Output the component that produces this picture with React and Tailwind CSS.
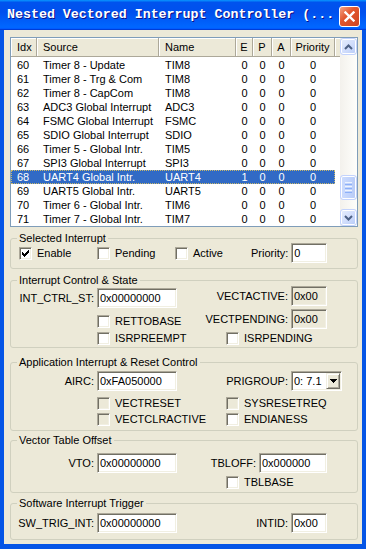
import React from "react";

const rows = [
  ["60", "Timer 8 - Update", "TIM8", "0"],
  ["61", "Timer 8 - Trg & Com", "TIM8", "0"],
  ["62", "Timer 8 - CapCom", "TIM8", "0"],
  ["63", "ADC3 Global Interrupt", "ADC3", "0"],
  ["64", "FSMC Global Interrupt", "FSMC", "0"],
  ["65", "SDIO Global Interrupt", "SDIO", "0"],
  ["66", "Timer 5 - Global Intr.", "TIM5", "0"],
  ["67", "SPI3 Global Interrupt", "SPI3", "0"],
  ["68", "UART4 Global Intr.", "UART4", "1"],
  ["69", "UART5 Global Intr.", "UART5", "0"],
  ["70", "Timer 6 - Global Intr.", "TIM6", "0"],
  ["71", "Timer 7 - Global Intr.", "TIM7", "0"],
];

const sunken =
  "border border-t-[#aca899] border-l-[#aca899] border-b-white border-r-white shadow-[inset_1px_1px_0_#716f64,inset_-1px_-1px_0_#f1efe2]";

function Check({ checked = false, disabled = false }) {
  return (
    <span
      className={`${sunken} w-[13px] h-[13px] shrink-0 flex items-center justify-center ${
        disabled ? "bg-[#ece9d8]" : "bg-white"
      }`}
    >
      {checked && (
        <svg width="7" height="7" viewBox="0 0 7 7" shapeRendering="crispEdges">
          <rect x="6" y="0" width="1" height="1" fill="#000" />
          <rect x="5" y="1" width="2" height="1" fill="#000" />
          <rect x="0" y="2" width="1" height="1" fill="#000" />
          <rect x="4" y="2" width="3" height="1" fill="#000" />
          <rect x="0" y="3" width="2" height="1" fill="#000" />
          <rect x="3" y="3" width="3" height="1" fill="#000" />
          <rect x="0" y="4" width="5" height="1" fill="#000" />
          <rect x="1" y="5" width="3" height="1" fill="#000" />
          <rect x="2" y="6" width="1" height="1" fill="#000" />
        </svg>
      )}
    </span>
  );
}

function CheckLabel({ label, checked, disabled, className = "" }) {
  return (
    <div className={`flex items-center gap-[5px] h-[13px] ${className}`}>
      <Check checked={checked} disabled={disabled} />
      <span className="leading-[13px] whitespace-nowrap">{label}</span>
    </div>
  );
}

function TextBox({ value, className = "", readOnly = false }) {
  return (
    <div
      className={`${sunken} h-[20px] flex items-center pl-[2px] whitespace-nowrap ${
        readOnly ? "bg-[#ece9d8]" : "bg-white"
      } ${className}`}
    >
      {value}
    </div>
  );
}

function Group({ label, className = "", children }) {
  return (
    <div className={`border border-[#d0d0bf] rounded-[3px] ${className}`}>
      <div className="-mt-[7px] ml-[6px] w-fit bg-[#ece9d8] px-[2px] leading-[13px] whitespace-nowrap">
        {label}
      </div>
      {children}
    </div>
  );
}

function Chevron({ up }) {
  return (
    <svg width="9" height="6" viewBox="0 0 9 6">
      <polyline
        points={up ? "1,5 4.5,1.5 8,5" : "1,1 4.5,4.5 8,1"}
        fill="none"
        stroke="#4d6185"
        strokeWidth="2"
      />
    </svg>
  );
}

const scrollBtn =
  "h-[17px] w-[17px] rounded-[3px] border border-[#c3d3fd] bg-[linear-gradient(135deg,#e6eefc,#d2defc_50%,#b7cbf7)] flex items-center justify-center shadow-[inset_0_0_0_1px_#fff]";

function ScrollBar() {
  return (
    <div className="w-[17px] flex flex-col bg-[linear-gradient(90deg,#f3f1ec,#fefefb)]">
      <div className={scrollBtn}>
        <Chevron up />
      </div>
      <div className="h-[120px]" />
      <div className="h-[25px] w-[17px] rounded-[3px] border border-[#c3d3fd] bg-[linear-gradient(90deg,#cddcfd,#c2d4fc_50%,#b8cbf6)] shadow-[inset_0_0_0_1px_#fff] flex flex-col items-center justify-center gap-[1px]">
        <div className="w-[7px] h-[1px] bg-[#eef4fe]" />
        <div className="w-[7px] h-[1px] bg-[#8cb0f8]" />
        <div className="w-[7px] h-[1px] bg-[#eef4fe]" />
        <div className="w-[7px] h-[1px] bg-[#8cb0f8]" />
        <div className="w-[7px] h-[1px] bg-[#eef4fe]" />
        <div className="w-[7px] h-[1px] bg-[#8cb0f8]" />
      </div>
      <div className="flex-1" />
      <div className={scrollBtn}>
        <Chevron />
      </div>
    </div>
  );
}

const headCell =
  "h-full flex items-center border-r border-r-[#aca899] shadow-[inset_1px_1px_0_#fff]";

function ListView() {
  return (
    <div className="h-[190px] border border-[#7f9db9] bg-white flex shrink-0">
      <div className="flex-1 flex flex-col overflow-hidden">
        <div className="h-[19px] flex bg-[#ece9d8] border-b border-b-[#aca899] shrink-0">
          <div className={`${headCell} w-[26px] pl-[6px]`}>Idx</div>
          <div className={`${headCell} w-[122px] pl-[6px]`}>Source</div>
          <div className={`${headCell} w-[77px] pl-[6px]`}>Name</div>
          <div className={`${headCell} w-[17px] justify-center`}>E</div>
          <div className={`${headCell} w-[19px] justify-center`}>P</div>
          <div className={`${headCell} w-[19px] justify-center`}>A</div>
          <div className={`${headCell} w-[44px] justify-center`}>Priority</div>
          <div className="h-full flex-1 shadow-[inset_1px_1px_0_#fff]" />
        </div>
        <div className="pt-[1px] flex flex-col">
          {rows.map((r) => {
            const sel = r[0] === "68";
            return (
              <div
                key={r[0]}
                className={`w-[324px] h-[14px] leading-[14px] flex whitespace-nowrap ${
                  sel
                    ? "bg-[#316ac5] text-white outline-1 outline-dotted outline-[#c8b86a] -outline-offset-1"
                    : ""
                }`}
              >
                <div className="w-[26px] pl-[6px]">{r[0]}</div>
                <div className="w-[122px] pl-[6px]">{r[1]}</div>
                <div className="w-[77px] pl-[6px]">{r[2]}</div>
                <div className="w-[17px] text-center">{r[3]}</div>
                <div className="w-[19px] text-center">0</div>
                <div className="w-[19px] text-center">0</div>
                <div className="w-[44px] text-center">0</div>
              </div>
            );
          })}
        </div>
      </div>
      <ScrollBar />
    </div>
  );
}

function TitleBar() {
  return (
    <div className="h-[30px] shrink-0 flex items-center pl-[7px] pr-[6px] bg-[linear-gradient(180deg,#0997ff,#0053ee_8%,#0050ee_40%,#06f_88%,#06f_93%,#005bff_95%,#003dd7_96%,#003dd7)]">
      <span className="flex-1 overflow-hidden whitespace-nowrap text-white font-bold font-['Liberation_Mono',monospace] text-[13.3px] [text-shadow:1px_1px_#0f1089]">
        Nested Vectored Interrupt Controller (...
      </span>
      <div className="mt-[3px] w-[21px] h-[21px] rounded-[3px] border border-white bg-[linear-gradient(135deg,#f4a486,#e2582f_40%,#cf4420)] flex items-center justify-center">
        <svg width="11" height="11" viewBox="0 0 11 11">
          <path d="M1.5 1.5 L9.5 9.5 M9.5 1.5 L1.5 9.5" stroke="#fff" strokeWidth="2.4" strokeLinecap="square" />
        </svg>
      </div>
    </div>
  );
}

export default function App() {
  return (
    <div className="w-[366px] h-[549px] flex flex-col bg-[#0555e6] font-['Liberation_Sans',Arial,sans-serif] text-[11px] text-black">
      <TitleBar />
      <div className="flex-1 mx-[4px] mb-[5px] bg-[#ece9d8] pt-[7px] pl-[6px] pr-[4px] flex flex-col">
        <ListView />

        <Group label="Selected Interrupt" className="mt-[11px] h-[31px]">
          <div className="-mt-[2px] h-[20px] flex items-center pl-[8px]">
            <CheckLabel label="Enable" checked className="w-[78px] gap-[4px]" />
            <CheckLabel label="Pending" className="w-[78px]" />
            <CheckLabel label="Active" className="w-[76px]" />
            <span>Priority:</span>
            <TextBox value="0" className="ml-[3px] w-[36px]" />
          </div>
        </Group>

        <Group label="Interrupt Control & State" className="mt-[11px] h-[68px]">
          <div className="flex">
            <div className="w-[190px] flex flex-col">
              <div className="mt-[1px] flex items-center">
                <span className="w-[83px] text-right">INT_CTRL_ST:</span>
                <TextBox value="0x00000000" className="ml-[3px] w-[80px]" />
              </div>
              <CheckLabel label="RETTOBASE" className="mt-[7px] pl-[86px]" />
              <CheckLabel label="ISRPREEMPT" className="mt-[4px] pl-[86px]" />
            </div>
            <div className="flex-1 flex flex-col">
              <div className="-mt-[1px] flex items-center">
                <span className="w-[87px] text-right">VECTACTIVE:</span>
                <TextBox value="0x00" readOnly className="ml-[3px] w-[36px]" />
              </div>
              <div className="mt-[3px] flex items-center">
                <span className="w-[87px] text-right">VECTPENDING:</span>
                <TextBox value="0x00" readOnly className="ml-[3px] w-[36px]" />
              </div>
              <CheckLabel label="ISRPENDING" className="mt-[3px] pl-[25px]" />
            </div>
          </div>
        </Group>

        <Group label="Application Interrupt & Reset Control" className="mt-[14px] h-[69px]">
          <div className="flex">
            <div className="w-[190px] flex flex-col">
              <div className="mt-[2px] flex items-center">
                <span className="w-[83px] text-right">AIRC:</span>
                <TextBox value="0xFA050000" className="ml-[3px] w-[80px]" />
              </div>
              <CheckLabel label="VECTRESET" disabled className="mt-[6px] pl-[86px]" />
              <CheckLabel label="VECTCLRACTIVE" disabled className="mt-[3px] pl-[86px]" />
            </div>
            <div className="flex-1 flex flex-col">
              <div className="mt-[2px] flex items-center">
                <span className="w-[87px] text-right">PRIGROUP:</span>
                <div className={`${sunken} ml-[3px] w-[51px] h-[20px] bg-white flex items-center pl-[2px] pr-[1px]`}>
                  <span className="flex-1 whitespace-nowrap">0: 7.1</span>
                  <div className="w-[14px] h-[16px] bg-[#ece9d8] border border-t-[#f1efe2] border-l-[#f1efe2] border-b-[#716f64] border-r-[#716f64] shadow-[inset_1px_1px_0_#fff,inset_-1px_-1px_0_#aca899] flex items-center justify-center">
                    <svg width="7" height="4" viewBox="0 0 7 4" shapeRendering="crispEdges">
                      <path d="M0 0 H7 L3.5 4 Z" fill="#000" />
                    </svg>
                  </div>
                </div>
              </div>
              <CheckLabel label="SYSRESETREQ" disabled className="mt-[6px] pl-[25px]" />
              <CheckLabel label="ENDIANESS" className="mt-[3px] pl-[25px]" />
            </div>
          </div>
        </Group>

        <Group label="Vector Table Offset" className="mt-[9px] h-[53px]">
          <div className="flex">
            <div className="w-[190px] flex flex-col">
              <div className="mt-[6px] flex items-center">
                <span className="w-[83px] text-right">VTO:</span>
                <TextBox value="0x00000000" className="ml-[3px] w-[80px]" />
              </div>
            </div>
            <div className="flex-1 flex flex-col">
              <div className="mt-[6px] flex items-center">
                <span className="w-[55px] text-right">TBLOFF:</span>
                <TextBox value="0x000000" className="ml-[3px] w-[68px]" />
              </div>
              <CheckLabel label="TBLBASE" className="mt-[3px] pl-[25px]" />
            </div>
          </div>
        </Group>

        <Group label="Software Interrupt Trigger" className="mt-[10px] h-[37px]">
          <div className="flex mt-[3px]">
            <div className="w-[190px] flex items-center">
              <span className="w-[83px] text-right">SW_TRIG_INT:</span>
              <TextBox value="0x00000000" className="ml-[3px] w-[80px]" />
            </div>
            <div className="flex-1 flex items-center">
              <span className="w-[87px] text-right">INTID:</span>
              <TextBox value="0x00" className="ml-[3px] w-[36px]" />
            </div>
          </div>
        </Group>
      </div>
    </div>
  );
}
